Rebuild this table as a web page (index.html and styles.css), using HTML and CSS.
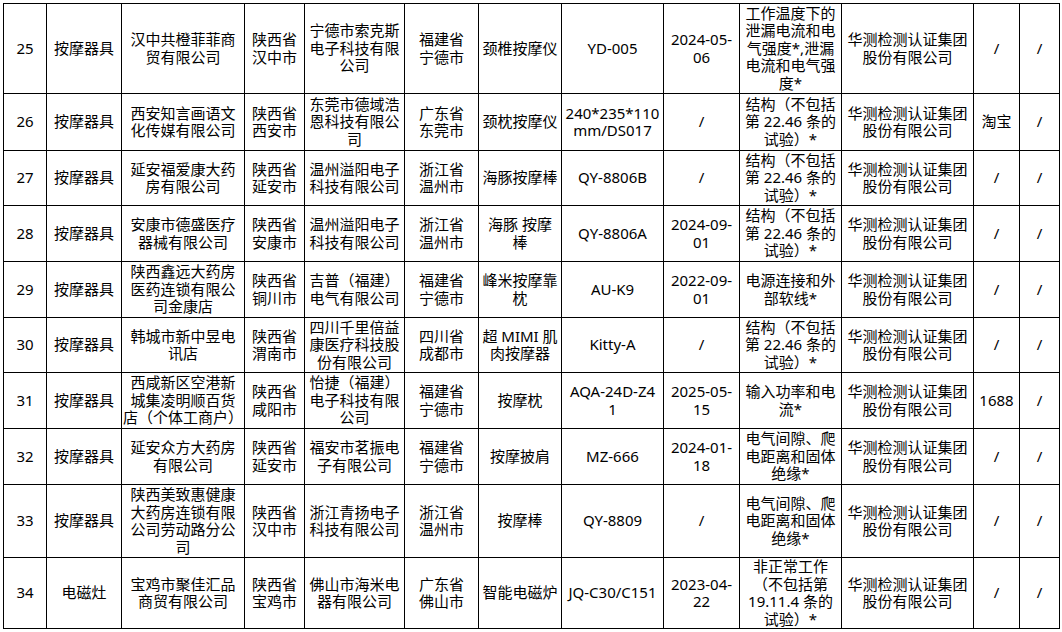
FILE: index.html
```html
<!DOCTYPE html>
<html lang="zh-CN">
<head>
<meta charset="utf-8">
<title>抽查结果</title>
<link rel="stylesheet" href="styles.css">
</head>
<body>
<table class="grid">
<colgroup>
<col class="c1"><col class="c2"><col class="c3"><col class="c4"><col class="c5"><col class="c6"><col class="c7"><col class="c8"><col class="c9"><col class="c10"><col class="c11"><col class="c12"><col class="c13">
</colgroup>
<tbody>
<tr class="r90">
<td>25</td><td>按摩器具</td><td>汉中共橙菲菲商<br>贸有限公司</td><td>陕西省<br>汉中市</td><td>宁德市索克斯<br>电子科技有限<br>公司</td><td>福建省<br>宁德市</td><td>颈椎按摩仪</td><td>YD-005</td><td>2024-05-<br>06</td><td>工作温度下的<br>泄漏电流和电<br>气强度*,泄漏<br>电流和电气强<br>度*</td><td>华测检测认证集团<br>股份有限公司</td><td>/</td><td>/</td>
</tr>
<tr class="r57">
<td>26</td><td>按摩器具</td><td>西安知言画语文<br>化传媒有限公司</td><td>陕西省<br>西安市</td><td>东莞市德域浩<br>恩科技有限公<br>司</td><td>广东省<br>东莞市</td><td>颈枕按摩仪</td><td>240*235*110<br>mm/DS017</td><td>/</td><td>结构（不包括<br>第 22.46 条的<br>试验）*</td><td>华测检测认证集团<br>股份有限公司</td><td>淘宝</td><td>/</td>
</tr>
<tr class="r55">
<td>27</td><td>按摩器具</td><td>延安福爱康大药<br>房有限公司</td><td>陕西省<br>延安市</td><td>温州溢阳电子<br>科技有限公司</td><td>浙江省<br>温州市</td><td>海豚按摩棒</td><td>QY-8806B</td><td>/</td><td>结构（不包括<br>第 22.46 条的<br>试验）*</td><td>华测检测认证集团<br>股份有限公司</td><td>/</td><td>/</td>
</tr>
<tr class="r56">
<td>28</td><td>按摩器具</td><td>安康市德盛医疗<br>器械有限公司</td><td>陕西省<br>安康市</td><td>温州溢阳电子<br>科技有限公司</td><td>浙江省<br>温州市</td><td>海豚 按摩<br>棒</td><td>QY-8806A</td><td>2024-09-<br>01</td><td>结构（不包括<br>第 22.46 条的<br>试验）*</td><td>华测检测认证集团<br>股份有限公司</td><td>/</td><td>/</td>
</tr>
<tr class="r56">
<td>29</td><td>按摩器具</td><td>陕西鑫远大药房<br>医药连锁有限公<br>司金康店</td><td>陕西省<br>铜川市</td><td>吉普（福建）<br>电气有限公司</td><td>福建省<br>宁德市</td><td>峰米按摩靠<br>枕</td><td>AU-K9</td><td>2022-09-<br>01</td><td>电源连接和外<br>部软线*</td><td>华测检测认证集团<br>股份有限公司</td><td>/</td><td>/</td>
</tr>
<tr class="r55">
<td>30</td><td>按摩器具</td><td>韩城市新中昱电<br>讯店</td><td>陕西省<br>渭南市</td><td>四川千里倍益<br>康医疗科技股<br>份有限公司</td><td>四川省<br>成都市</td><td>超 MIMI 肌<br>肉按摩器</td><td>Kitty-A</td><td>/</td><td>结构（不包括<br>第 22.46 条的<br>试验）*</td><td>华测检测认证集团<br>股份有限公司</td><td>/</td><td>/</td>
</tr>
<tr class="r56">
<td>31</td><td>按摩器具</td><td>西咸新区空港新<br>城集凌明顺百货<br>店（个体工商户）</td><td>陕西省<br>咸阳市</td><td>怡捷（福建）<br>电子科技有限<br>公司</td><td>福建省<br>宁德市</td><td>按摩枕</td><td>AQA-24D-Z4<br>1</td><td>2025-05-<br>15</td><td>输入功率和电<br>流*</td><td>华测检测认证集团<br>股份有限公司</td><td>1688</td><td>/</td>
</tr>
<tr class="r56">
<td>32</td><td>按摩器具</td><td>延安众方大药房<br>有限公司</td><td>陕西省<br>延安市</td><td>福安市茗振电<br>子有限公司</td><td>福建省<br>宁德市</td><td>按摩披肩</td><td>MZ-666</td><td>2024-01-<br>18</td><td>电气间隙、爬<br>电距离和固体<br>绝缘*</td><td>华测检测认证集团<br>股份有限公司</td><td>/</td><td>/</td>
</tr>
<tr class="r73">
<td>33</td><td>按摩器具</td><td>陕西美致惠健康<br>大药房连锁有限<br>公司劳动路分公<br>司</td><td>陕西省<br>汉中市</td><td>浙江青扬电子<br>科技有限公司</td><td>浙江省<br>温州市</td><td>按摩棒</td><td>QY-8809</td><td>/</td><td>电气间隙、爬<br>电距离和固体<br>绝缘*</td><td>华测检测认证集团<br>股份有限公司</td><td>/</td><td>/</td>
</tr>
<tr class="r71">
<td>34</td><td>电磁灶</td><td>宝鸡市聚佳汇品<br>商贸有限公司</td><td>陕西省<br>宝鸡市</td><td>佛山市海米电<br>器有限公司</td><td>广东省<br>佛山市</td><td>智能电磁炉</td><td>JQ-C30/C151</td><td>2023-04-<br>22</td><td>非正常工作<br>（不包括第<br>19.11.4 条的<br>试验）*</td><td>华测检测认证集团<br>股份有限公司</td><td>/</td><td>/</td>
</tr>
</tbody>
</table>
</body>
</html>
```

FILE: styles.css
```css
html, body {
  margin: 0;
  padding: 0;
  background: #ffffff;
}

body {
  font-family: "Noto Sans", "Noto Sans CJK SC", sans-serif;
  font-size: 15px;
  color: #000000;
}

.grid {
  border-collapse: collapse;
  table-layout: fixed;
  width: 1056px;
  margin: 3px 0 0 3px;
}

.grid td {
  border: 1px solid #000000;
  padding: 0;
  text-align: center;
  vertical-align: middle;
  line-height: 17.5px;
  white-space: nowrap;
  overflow: visible;
}

.c1 { width: 43px; }
.c2 { width: 75px; }
.c3 { width: 123px; }
.c4 { width: 60px; }
.c5 { width: 100px; }
.c6 { width: 74px; }
.c7 { width: 83px; }
.c8 { width: 102px; }
.c9 { width: 76px; }
.c10 { width: 102px; }
.c11 { width: 132px; }
.c12 { width: 46px; }
.c13 { width: 40px; }

.r90 { height: 90px; }
.r57 { height: 57px; }
.r55 { height: 55px; }
.r56 { height: 56px; }
.r73 { height: 73px; }
.r71 { height: 71px; }
```
